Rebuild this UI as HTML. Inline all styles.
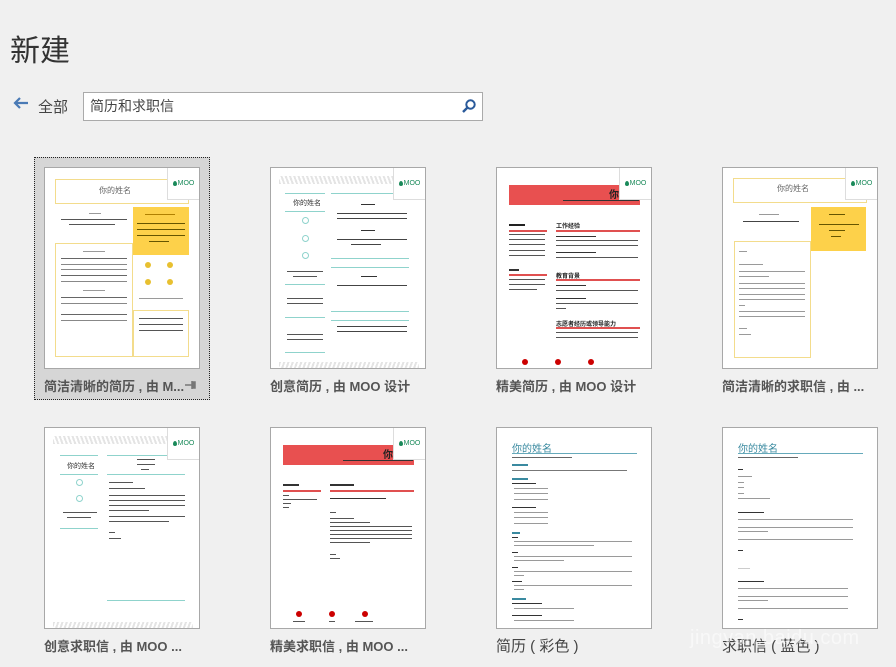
<!DOCTYPE html>
<html><head><meta charset="utf-8"><style>
*{margin:0;padding:0;box-sizing:border-box}
body{width:896px;height:667px;background:#f0f0f0;font-family:"Liberation Sans","Noto Sans CJK SC",sans-serif;position:relative;overflow:hidden}
.a{position:absolute}
.t{position:absolute;width:156px;height:202px;background:#fff;border:1px solid #a8a8a8;overflow:hidden}
.l{position:absolute;height:2px;background:#9a9a9a}
.d{position:absolute;height:2px;background:#333}
.lab{position:absolute;font-size:13px;font-weight:bold;color:#555;white-space:nowrap}
.moo{position:absolute;right:0;top:0;width:32px;height:32px;background:#fff;border-left:1px solid #ddd;border-bottom:1px solid #ddd;font-size:7px;color:#1a8a5a;text-align:center;line-height:32px}
.moo b{display:inline-block;width:4px;height:5px;background:#1a8a5a;border-radius:50% 50% 50% 50%/60% 60% 40% 40%;margin-right:1px;vertical-align:-1px}
.tl{position:absolute;height:1px;background:#8fd3cc}
.rl{position:absolute;height:2px;background:#e05050}
.c{position:absolute;border-radius:50%}
</style></head><body>
<div class="a" style="left:10px;top:26px;font-size:30px;color:#333">新建</div>
<svg class="a" style="left:13px;top:97px" width="16" height="12" viewBox="0 0 16 12"><path d="M15 6H3M7 1L2 6l5 5" stroke="#4a7ab5" stroke-width="2.2" fill="none"/></svg>
<div class="a" style="left:38px;top:96px;font-size:15px;color:#444">全部</div>
<div class="a" style="left:83px;top:92px;width:400px;height:29px;background:#fff;border:1px solid #aaa"></div>
<div class="a" style="left:90px;top:96px;font-size:14px;color:#444">简历和求职信</div>
<svg class="a" style="left:461px;top:98px" width="16" height="16" viewBox="0 0 16 16"><circle cx="9.5" cy="6.5" r="4.2" stroke="#2a5a9a" stroke-width="2" fill="none"/><path d="M6.5 9.5L2 14" stroke="#2a5a9a" stroke-width="2.4"/></svg>

<div class="a" style="left:34px;top:157px;width:176px;height:243px;background:#d6d6d6;border:1px dotted #222"></div>

<!-- T1 -->
<div class="t" style="left:44px;top:167px">
 <div class="a" style="left:10px;top:11px;width:134px;height:25px;border:1px solid #f3dc8c"></div>
 <div class="a" style="left:54px;top:17px;font-size:8px;color:#666">你的姓名</div>
 <div class="a" style="left:88px;top:39px;width:56px;height:48px;background:#fdd14a"></div>
 <div class="l" style="left:100px;top:46px;width:30px;height:1px;background:#b08000"></div>
 <div class="l" style="left:92px;top:55px;width:48px;height:1px;background:#665500"></div><div class="l" style="left:92px;top:61px;width:48px;height:1px;background:#665500"></div><div class="l" style="left:92px;top:67px;width:48px;height:1px;background:#665500"></div><div class="l" style="left:104px;top:73px;width:20px;height:1px;background:#665500"></div>
 <div class="l" style="left:44px;top:45px;width:12px;height:1px"></div>
 <div class="l" style="left:16px;top:51px;width:66px;height:1px;background:#555"></div><div class="l" style="left:24px;top:56px;width:46px;height:1px;background:#555"></div>
 <div class="a" style="left:10px;top:75px;width:78px;height:114px;border:1px solid #f3dc8c"></div>
 <div class="a" style="left:88px;top:142px;width:56px;height:47px;border:1px solid #f3dc8c"></div>
 <div class="l" style="left:38px;top:83px;width:22px;height:1px"></div>
 <div class="l" style="left:16px;top:90px;width:66px;height:1px;background:#666"></div><div class="l" style="left:16px;top:96px;width:66px;height:1px;background:#888"></div><div class="l" style="left:16px;top:101px;width:66px;height:1px;background:#888"></div><div class="l" style="left:16px;top:107px;width:66px;height:1px;background:#666"></div><div class="l" style="left:16px;top:113px;width:66px;height:1px;background:#888"></div>
 <div class="l" style="left:38px;top:122px;width:22px;height:1px"></div>
 <div class="l" style="left:16px;top:129px;width:66px;height:1px;background:#666"></div><div class="l" style="left:16px;top:135px;width:66px;height:1px;background:#888"></div><div class="l" style="left:16px;top:146px;width:66px;height:1px;background:#666"></div><div class="l" style="left:16px;top:152px;width:66px;height:1px;background:#888"></div>
 <div class="c" style="left:100px;top:94px;width:6px;height:6px;background:#e8c030"></div><div class="c" style="left:122px;top:94px;width:6px;height:6px;background:#e8c030"></div>
 <div class="c" style="left:100px;top:111px;width:6px;height:6px;background:#e8c030"></div><div class="c" style="left:122px;top:111px;width:6px;height:6px;background:#e8c030"></div>
 <div class="l" style="left:94px;top:130px;width:44px;height:1px"></div>
 <div class="l" style="left:94px;top:150px;width:44px;height:1px;background:#555"></div><div class="l" style="left:94px;top:156px;width:44px;height:1px;background:#555"></div><div class="l" style="left:94px;top:162px;width:44px;height:1px;background:#555"></div>
 <div class="moo"><b></b>MOO</div>
</div>
<div class="lab" style="left:44px;top:376px">简洁清晰的简历 , 由 M...</div>
<svg class="a" style="left:185px;top:380px" width="12" height="10" viewBox="0 0 12 10"><path d="M0 5h7M7 1v8M7 2h3v6H7" stroke="#777" stroke-width="1.5" fill="#777"/></svg>

<!-- T2 -->
<div class="t" style="left:270px;top:167px">
 <div class="a" style="left:8px;top:8px;width:115px;height:8px;background:repeating-linear-gradient(70deg,#e4e4e4 0 2px,#fff 2px 4px)"></div>
 <div class="tl" style="left:14px;top:25px;width:40px"></div><div class="tl" style="left:60px;top:25px;width:78px"></div>
 <div class="a" style="left:22px;top:30px;font-size:7px;color:#333">你的姓名</div>
 <div class="tl" style="left:14px;top:43px;width:40px"></div>
 <div class="c" style="left:31px;top:49px;width:7px;height:7px;border:1px solid #8fd3cc"></div>
 <div class="c" style="left:31px;top:67px;width:7px;height:7px;border:1px solid #8fd3cc"></div>
 <div class="c" style="left:31px;top:84px;width:7px;height:7px;border:1px solid #8fd3cc"></div>
 <div class="l" style="left:16px;top:103px;width:36px;height:1px;background:#555"></div><div class="l" style="left:22px;top:108px;width:24px;height:1px;background:#555"></div>
 <div class="tl" style="left:14px;top:116px;width:40px"></div>
 <div class="l" style="left:16px;top:130px;width:36px;height:1px;background:#555"></div><div class="l" style="left:16px;top:135px;width:36px;height:1px;background:#555"></div>
 <div class="tl" style="left:14px;top:149px;width:40px"></div>
 <div class="l" style="left:16px;top:166px;width:36px;height:1px;background:#555"></div><div class="l" style="left:16px;top:171px;width:36px;height:1px;background:#555"></div>
 <div class="tl" style="left:14px;top:184px;width:40px"></div>
 <div class="d" style="left:90px;top:36px;width:14px;height:1px"></div>
 <div class="l" style="left:66px;top:45px;width:70px;height:1px;background:#444"></div><div class="l" style="left:66px;top:50px;width:70px;height:1px;background:#444"></div>
 <div class="d" style="left:90px;top:62px;width:14px;height:1px"></div>
 <div class="l" style="left:66px;top:71px;width:70px;height:1px;background:#444"></div><div class="l" style="left:80px;top:76px;width:30px;height:1px;background:#444"></div>
 <div class="tl" style="left:60px;top:90px;width:78px"></div><div class="tl" style="left:60px;top:99px;width:78px"></div>
 <div class="d" style="left:90px;top:108px;width:16px;height:1px"></div>
 <div class="l" style="left:66px;top:117px;width:70px;height:1px;background:#444"></div>
 <div class="tl" style="left:60px;top:143px;width:78px"></div><div class="tl" style="left:60px;top:152px;width:78px"></div>
 <div class="l" style="left:66px;top:158px;width:70px;height:1px;background:#444"></div><div class="l" style="left:66px;top:163px;width:70px;height:1px;background:#444"></div>
 <div class="a" style="left:8px;top:194px;width:140px;height:6px;background:repeating-linear-gradient(110deg,#e4e4e4 0 2px,#fff 2px 4px)"></div>
 <div class="moo"><b></b>MOO</div>
</div>
<div class="lab" style="left:270px;top:376px">创意简历 , 由 MOO 设计</div>

<!-- T3 -->
<div class="t" style="left:496px;top:167px">
 <div class="a" style="left:12px;top:17px;width:131px;height:20px;background:#e85050"></div>
 <div class="a" style="left:112px;top:18px;font-size:10px;font-weight:bold;color:#222">你的</div>
 <div class="d" style="left:66px;top:32px;width:76px;height:1px"></div>
 <div class="d" style="left:12px;top:56px;width:16px;background:#222"></div><div class="rl" style="left:12px;top:62px;width:38px"></div>
 <div class="l" style="left:12px;top:66px;width:36px;height:1px;background:#555"></div><div class="l" style="left:12px;top:71px;width:36px;height:1px;background:#555"></div><div class="l" style="left:12px;top:76px;width:36px;height:1px;background:#555"></div><div class="l" style="left:12px;top:82px;width:36px;height:1px;background:#555"></div><div class="l" style="left:12px;top:87px;width:36px;height:1px;background:#555"></div>
 <div class="d" style="left:12px;top:101px;width:10px"></div><div class="rl" style="left:12px;top:106px;width:38px"></div>
 <div class="l" style="left:12px;top:111px;width:36px;height:1px;background:#555"></div><div class="l" style="left:12px;top:116px;width:36px;height:1px;background:#555"></div><div class="l" style="left:12px;top:121px;width:28px;height:1px;background:#555"></div>
 <div class="a" style="left:59px;top:53px;font-size:6px;font-weight:bold;color:#222">工作经验</div><div class="rl" style="left:59px;top:62px;width:84px"></div>
 <div class="d" style="left:59px;top:68px;width:40px;height:1px"></div><div class="l" style="left:59px;top:72px;width:82px;height:1px;background:#555"></div><div class="l" style="left:59px;top:77px;width:82px;height:1px;background:#555"></div>
 <div class="d" style="left:59px;top:84px;width:40px;height:1px"></div><div class="l" style="left:59px;top:89px;width:82px;height:1px;background:#555"></div>
 <div class="a" style="left:59px;top:103px;font-size:6px;font-weight:bold;color:#222">教育背景</div><div class="rl" style="left:59px;top:111px;width:84px"></div>
 <div class="d" style="left:59px;top:117px;width:30px;height:1px"></div><div class="l" style="left:59px;top:122px;width:82px;height:1px;background:#555"></div>
 <div class="d" style="left:59px;top:130px;width:30px;height:1px"></div><div class="l" style="left:59px;top:135px;width:82px;height:1px;background:#555"></div><div class="l" style="left:59px;top:140px;width:10px;height:1px;background:#555"></div>
 <div class="a" style="left:59px;top:151px;font-size:6px;font-weight:bold;color:#222">志愿者经历或领导能力</div><div class="rl" style="left:59px;top:159px;width:84px"></div>
 <div class="l" style="left:59px;top:164px;width:82px;height:1px;background:#555"></div><div class="l" style="left:59px;top:169px;width:82px;height:1px;background:#555"></div>
 <div class="c" style="left:25px;top:191px;width:6px;height:6px;background:#c00"></div><div class="c" style="left:58px;top:191px;width:6px;height:6px;background:#c00"></div><div class="c" style="left:91px;top:191px;width:6px;height:6px;background:#c00"></div>
 <div class="moo"><b></b>MOO</div>
</div>
<div class="lab" style="left:496px;top:376px">精美简历 , 由 MOO 设计</div>

<!-- T4 -->
<div class="t" style="left:722px;top:167px">
 <div class="a" style="left:10px;top:10px;width:134px;height:25px;border:1px solid #f3dc8c"></div>
 <div class="a" style="left:54px;top:15px;font-size:8px;color:#666">你的姓名</div>
 <div class="a" style="left:88px;top:39px;width:55px;height:44px;background:#fdd14a"></div>
 <div class="l" style="left:106px;top:46px;width:16px;height:1px;background:#665500"></div><div class="l" style="left:96px;top:56px;width:40px;height:1px;background:#665500"></div><div class="l" style="left:106px;top:62px;width:16px;height:1px;background:#665500"></div><div class="l" style="left:108px;top:68px;width:10px;height:1px;background:#665500"></div>
 <div class="l" style="left:36px;top:46px;width:20px;height:1px"></div><div class="l" style="left:20px;top:53px;width:56px;height:1px;background:#444"></div>
 <div class="a" style="left:11px;top:73px;width:77px;height:117px;border:1px solid #f3dc8c"></div>
 <div class="l" style="left:16px;top:83px;width:8px;height:1px"></div>
 <div class="l" style="left:16px;top:96px;width:24px;height:1px"></div>
 <div class="l" style="left:16px;top:103px;width:66px;height:1px"></div><div class="l" style="left:16px;top:108px;width:30px;height:1px"></div>
 <div class="l" style="left:16px;top:115px;width:66px;height:1px"></div><div class="l" style="left:16px;top:120px;width:66px;height:1px"></div><div class="l" style="left:16px;top:126px;width:66px;height:1px"></div><div class="l" style="left:16px;top:131px;width:66px;height:1px"></div><div class="l" style="left:16px;top:137px;width:6px;height:1px"></div>
 <div class="l" style="left:16px;top:143px;width:66px;height:1px"></div><div class="l" style="left:16px;top:148px;width:66px;height:1px"></div>
 <div class="l" style="left:16px;top:160px;width:8px;height:1px"></div><div class="l" style="left:16px;top:166px;width:12px;height:1px"></div>
 <div class="moo"><b></b>MOO</div>
</div>
<div class="lab" style="left:722px;top:376px">简洁清晰的求职信 , 由 ...</div>

<!-- T5 -->
<div class="t" style="left:44px;top:427px">
 <div class="a" style="left:8px;top:8px;width:115px;height:8px;background:repeating-linear-gradient(70deg,#e4e4e4 0 2px,#fff 2px 4px)"></div>
 <div class="tl" style="left:15px;top:27px;width:38px"></div><div class="tl" style="left:62px;top:27px;width:78px"></div>
 <div class="a" style="left:22px;top:33px;font-size:7px;color:#333">你的姓名</div>
 <div class="tl" style="left:15px;top:46px;width:38px"></div>
 <div class="c" style="left:31px;top:51px;width:7px;height:7px;border:1px solid #8fd3cc"></div>
 <div class="c" style="left:31px;top:67px;width:7px;height:7px;border:1px solid #8fd3cc"></div>
 <div class="l" style="left:18px;top:84px;width:34px;height:1px;background:#555"></div><div class="l" style="left:22px;top:89px;width:24px;height:1px;background:#555"></div>
 <div class="tl" style="left:15px;top:100px;width:38px"></div>
 <div class="l" style="left:92px;top:31px;width:18px;height:1px;background:#555"></div><div class="l" style="left:92px;top:36px;width:18px;height:1px;background:#555"></div><div class="l" style="left:96px;top:41px;width:8px;height:1px;background:#555"></div>
 <div class="tl" style="left:62px;top:46px;width:78px"></div>
 <div class="l" style="left:64px;top:54px;width:24px;height:1px;background:#555"></div><div class="l" style="left:64px;top:60px;width:36px;height:1px;background:#555"></div>
 <div class="l" style="left:64px;top:67px;width:76px;height:1px;background:#555"></div><div class="l" style="left:64px;top:72px;width:76px;height:1px;background:#555"></div><div class="l" style="left:64px;top:77px;width:76px;height:1px;background:#555"></div><div class="l" style="left:64px;top:82px;width:40px;height:1px;background:#555"></div>
 <div class="l" style="left:64px;top:88px;width:76px;height:1px;background:#555"></div><div class="l" style="left:64px;top:93px;width:60px;height:1px;background:#555"></div>
 <div class="l" style="left:64px;top:104px;width:6px;height:1px;background:#555"></div><div class="l" style="left:64px;top:110px;width:12px;height:1px;background:#555"></div>
 <div class="tl" style="left:62px;top:172px;width:78px"></div>
 <div class="a" style="left:8px;top:194px;width:140px;height:6px;background:repeating-linear-gradient(110deg,#e4e4e4 0 2px,#fff 2px 4px)"></div>
 <div class="moo"><b></b>MOO</div>
</div>
<div class="lab" style="left:44px;top:636px">创意求职信 , 由 MOO ...</div>

<!-- T6 -->
<div class="t" style="left:270px;top:427px">
 <div class="a" style="left:12px;top:17px;width:131px;height:20px;background:#e85050"></div>
 <div class="a" style="left:112px;top:18px;font-size:10px;font-weight:bold;color:#222">你的</div>
 <div class="d" style="left:72px;top:32px;width:70px;height:1px"></div>
 <div class="d" style="left:12px;top:56px;width:16px"></div><div class="rl" style="left:12px;top:62px;width:38px"></div>
 <div class="l" style="left:12px;top:67px;width:6px;height:1px;background:#555"></div><div class="l" style="left:12px;top:71px;width:34px;height:1px;background:#555"></div><div class="l" style="left:12px;top:75px;width:8px;height:1px;background:#555"></div><div class="l" style="left:12px;top:79px;width:6px;height:1px;background:#555"></div>
 <div class="d" style="left:59px;top:56px;width:24px"></div><div class="rl" style="left:59px;top:62px;width:84px"></div>
 <div class="d" style="left:59px;top:70px;width:56px;height:1px"></div>
 <div class="l" style="left:59px;top:84px;width:6px;height:1px;background:#555"></div>
 <div class="l" style="left:59px;top:90px;width:24px;height:1px;background:#555"></div><div class="l" style="left:59px;top:94px;width:40px;height:1px;background:#555"></div>
 <div class="l" style="left:59px;top:98px;width:82px;height:1px;background:#555"></div><div class="l" style="left:59px;top:102px;width:82px;height:1px;background:#555"></div><div class="l" style="left:59px;top:106px;width:82px;height:1px;background:#555"></div><div class="l" style="left:59px;top:110px;width:82px;height:1px;background:#555"></div><div class="l" style="left:59px;top:114px;width:40px;height:1px;background:#555"></div>
 <div class="l" style="left:59px;top:126px;width:6px;height:1px;background:#555"></div><div class="l" style="left:59px;top:130px;width:10px;height:1px;background:#555"></div>
 <div class="c" style="left:25px;top:183px;width:6px;height:6px;background:#c00"></div><div class="c" style="left:58px;top:183px;width:6px;height:6px;background:#c00"></div><div class="c" style="left:91px;top:183px;width:6px;height:6px;background:#c00"></div>
 <div class="l" style="left:22px;top:193px;width:12px;height:1px;background:#555"></div><div class="l" style="left:58px;top:193px;width:6px;height:1px;background:#555"></div><div class="l" style="left:84px;top:193px;width:18px;height:1px;background:#555"></div>
 <div class="moo"><b></b>MOO</div>
</div>
<div class="lab" style="left:270px;top:636px">精美求职信 , 由 MOO ...</div>

<!-- T7 -->
<div class="t" style="left:496px;top:427px">
 <div class="a" style="left:15px;top:12px;font-size:10px;color:#3a8aa0">你的姓名</div>
 <div class="a" style="left:15px;top:25px;width:125px;height:1px;background:#6ab"></div>
 <div class="l" style="left:15px;top:29px;width:60px;height:1px;background:#666"></div>
 <div class="l" style="left:15px;top:36px;width:16px;background:#3a8aa0"></div><div class="l" style="left:15px;top:42px;width:115px;height:1px;background:#777"></div>
 <div class="l" style="left:15px;top:50px;width:16px;background:#3a8aa0"></div>
 <div class="d" style="left:15px;top:55px;width:24px;height:1px"></div><div class="l" style="left:17px;top:60px;width:34px;height:1px"></div><div class="l" style="left:17px;top:65px;width:34px;height:1px"></div><div class="l" style="left:17px;top:71px;width:34px;height:1px"></div>
 <div class="d" style="left:15px;top:79px;width:24px;height:1px"></div><div class="l" style="left:17px;top:84px;width:34px;height:1px"></div><div class="l" style="left:17px;top:89px;width:34px;height:1px"></div><div class="l" style="left:17px;top:95px;width:34px;height:1px"></div>
 <div class="l" style="left:15px;top:104px;width:8px;background:#3a8aa0"></div>
 <div class="d" style="left:15px;top:109px;width:6px;height:1px"></div><div class="l" style="left:17px;top:113px;width:118px;height:1px"></div><div class="l" style="left:17px;top:117px;width:80px;height:1px"></div>
 <div class="d" style="left:15px;top:124px;width:6px;height:1px"></div><div class="l" style="left:17px;top:128px;width:118px;height:1px"></div><div class="l" style="left:17px;top:132px;width:50px;height:1px"></div>
 <div class="d" style="left:15px;top:139px;width:6px;height:1px"></div><div class="l" style="left:17px;top:143px;width:118px;height:1px"></div><div class="l" style="left:17px;top:147px;width:10px;height:1px"></div>
 <div class="d" style="left:15px;top:153px;width:10px;height:1px"></div><div class="l" style="left:17px;top:157px;width:118px;height:1px"></div><div class="l" style="left:17px;top:161px;width:10px;height:1px"></div>
 <div class="l" style="left:15px;top:170px;width:14px;background:#3a8aa0"></div>
 <div class="d" style="left:15px;top:175px;width:30px;height:1px"></div><div class="l" style="left:17px;top:180px;width:60px;height:1px"></div>
 <div class="d" style="left:15px;top:187px;width:30px;height:1px"></div><div class="l" style="left:17px;top:192px;width:60px;height:1px"></div>
</div>
<div class="lab" style="left:496px;top:635px;font-weight:normal;font-size:15px;color:#444">简历 ( 彩色 )</div>

<!-- T8 -->
<div class="t" style="left:722px;top:427px">
 <div class="a" style="left:15px;top:12px;font-size:10px;color:#3a8aa0">你的姓名</div>
 <div class="a" style="left:15px;top:25px;width:125px;height:1px;background:#6ab"></div>
 <div class="l" style="left:15px;top:29px;width:60px;height:1px;background:#666"></div>
 <div class="d" style="left:15px;top:41px;width:5px;height:1px"></div>
 <div class="l" style="left:15px;top:48px;width:14px;height:1px"></div><div class="l" style="left:15px;top:54px;width:6px;height:1px"></div><div class="l" style="left:15px;top:59px;width:6px;height:1px"></div><div class="l" style="left:15px;top:65px;width:6px;height:1px"></div><div class="l" style="left:15px;top:70px;width:32px;height:1px"></div>
 <div class="d" style="left:15px;top:84px;width:26px;height:1px"></div>
 <div class="l" style="left:15px;top:91px;width:115px;height:1px"></div><div class="l" style="left:15px;top:99px;width:115px;height:1px"></div><div class="l" style="left:15px;top:103px;width:30px;height:1px"></div><div class="l" style="left:15px;top:111px;width:115px;height:1px"></div>
 <div class="d" style="left:15px;top:122px;width:5px;height:1px"></div>
 <div class="l" style="left:15px;top:140px;width:12px;height:1px;background:#ccc"></div>
 <div class="d" style="left:15px;top:153px;width:26px;height:1px"></div>
 <div class="l" style="left:15px;top:160px;width:110px;height:1px"></div><div class="l" style="left:15px;top:168px;width:110px;height:1px"></div><div class="l" style="left:15px;top:172px;width:30px;height:1px"></div><div class="l" style="left:15px;top:180px;width:110px;height:1px"></div>
 <div class="d" style="left:15px;top:191px;width:5px;height:1px"></div>
</div>
<div class="lab" style="left:722px;top:635px;font-weight:normal;font-size:15px;color:#444">求职信 ( 蓝色 )</div>
<div class="a" style="left:690px;top:627px;font-size:20px;color:rgba(255,255,255,0.55);letter-spacing:0.5px">jingyan.baidu.com</div>
</body></html>
